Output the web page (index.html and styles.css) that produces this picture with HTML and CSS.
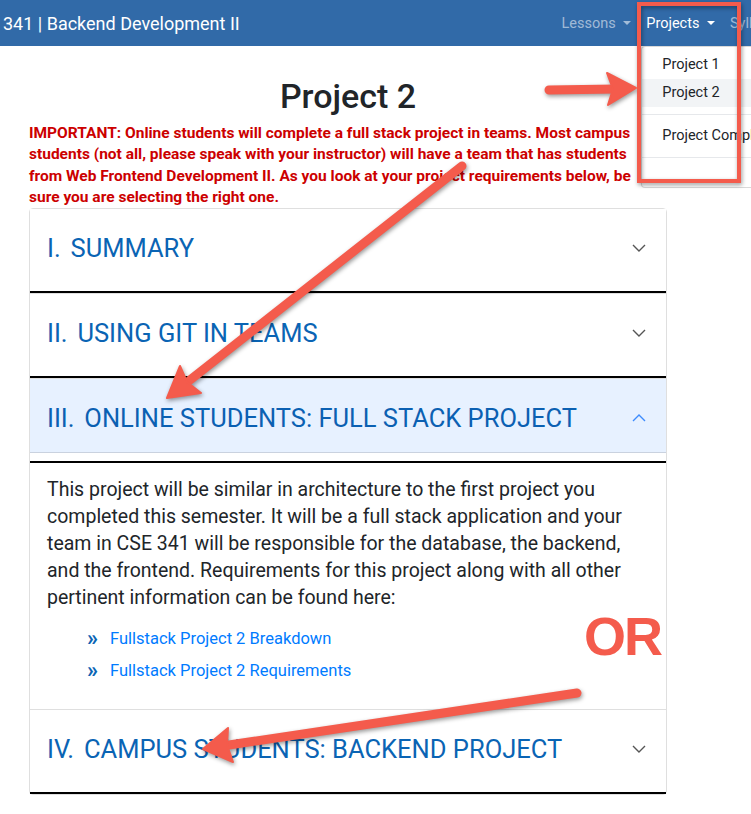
FILE: index.html
```html
<!DOCTYPE html>
<html lang="en">
<head>
<meta charset="utf-8">
<title>Project 2 | 341 Backend Development II</title>
<link rel="stylesheet" href="styles.css">
</head>
<body>
<div class="page">
  <nav class="navbar">
    <a class="brand" href="#">341 | Backend Development II</a>
    <ul class="nav-links">
      <li class="nav-item"><a class="nav-link" href="#">Lessons<span class="caret"></span></a></li>
      <li class="nav-item">
        <a class="nav-link active" href="#">Projects<span class="caret"></span></a>
        <div class="dropdown">
          <a class="dropdown-item" href="#">Project 1</a>
          <a class="dropdown-item hovered" href="#">Project 2</a>
          <div class="divider"></div>
          <a class="dropdown-item" href="#">Project Completion</a>
          <div class="divider"></div>
        </div>
      </li>
      <li class="nav-item"><a class="nav-link" href="#">Syllabus<span class="caret"></span></a></li>
    </ul>
  </nav>

  <main class="content">
    <h1 class="title">Project 2</h1>
    <p class="important">IMPORTANT: Online students will complete a full stack project in teams. Most campus<br>
      students (not all, please speak with your instructor) will have a team that has students<br>
      from Web Frontend Development II. As you look at your project requirements below, be<br>
      sure you are selecting the right one.</p>

    <div class="accordion">
      <div class="acc-item">
        <h2 class="acc-header">
          <button class="acc-button"><span class="acc-title"><span class="num">I.</span> SUMMARY</span>
            <svg class="chev" width="14" height="8" viewBox="0 0 14 8"><polyline points="1,1 7,7 13,1"/></svg>
          </button>
        </h2>
        <div class="acc-rule"></div>
      </div>
      <div class="acc-item">
        <h2 class="acc-header">
          <button class="acc-button"><span class="acc-title"><span class="num">II.</span> USING GIT IN TEAMS</span>
            <svg class="chev" width="14" height="8" viewBox="0 0 14 8"><polyline points="1,1 7,7 13,1"/></svg>
          </button>
        </h2>
        <div class="acc-rule"></div>
      </div>
      <div class="acc-item">
        <h2 class="acc-header">
          <button class="acc-button expanded"><span class="acc-title"><span class="num">III.</span> ONLINE STUDENTS: FULL STACK PROJECT</span>
            <svg class="chev up" width="14" height="8" viewBox="0 0 14 8"><polyline points="1,7 7,1 13,7"/></svg>
          </button>
        </h2>
        <div class="acc-rule"></div>
        <div class="acc-body">
          <p>This project will be similar in architecture to the first project you completed this semester. It will be a full stack application and your team in CSE 341 will be responsible for the database, the backend, and the frontend. Requirements for this project along with all other pertinent information can be found here:</p>
          <ul class="links">
            <li><span class="mark">»</span><a href="#">Fullstack Project 2 Breakdown</a></li>
            <li><span class="mark">»</span><a href="#">Fullstack Project 2 Requirements</a></li>
          </ul>
        </div>
      </div>
      <div class="acc-item">
        <h2 class="acc-header">
          <button class="acc-button"><span class="acc-title"><span class="num">IV.</span> CAMPUS STUDENTS: BACKEND PROJECT</span>
            <svg class="chev" width="14" height="8" viewBox="0 0 14 8"><polyline points="1,1 7,7 13,1"/></svg>
          </button>
        </h2>
        <div class="acc-rule"></div>
      </div>
    </div>
  </main>

  <svg class="annotations" width="751" height="814" viewBox="0 0 751 814" aria-hidden="true">
    <g class="ann">
      <rect class="box" x="639" y="4" width="100" height="177"/>
      <line class="shaft" x1="549" y1="90" x2="616" y2="89"/>
      <polygon class="head" points="636,88 607,73 613,89 608,105"/>
      <line class="shaft" x1="462" y1="166" x2="190" y2="380"/>
      <polygon class="head" points="167,398 180,366 187,382 201,393"/>
      <line class="shaft" x1="577" y1="693" x2="229" y2="745"/>
      <polygon class="head" points="203,749 228,728 227,745 233,762"/>
    </g>
    <text class="or" x="584" y="655">OR</text>
  </svg>
</div>
</body>
</html>
```

FILE: styles.css
```css
* {
  box-sizing: border-box;
}

body {
  margin: 0;
  font-family: Roboto, "Noto Sans", "Liberation Sans", Arial, sans-serif;
  color: #212529;
  background: #fff;
}

.page {
  position: relative;
  width: 751px;
  height: 814px;
  overflow: hidden;
}

/* ---------- navbar ---------- */
.navbar {
  display: flex;
  align-items: center;
  height: 46px;
  padding-left: 3px;
  background: #316aa8;
}

.brand {
  flex: 0 0 551px;
  color: #fff;
  font-size: 18px;
  text-decoration: none;
}

.nav-links {
  display: flex;
  flex: none;
  margin: 0;
  padding: 0;
  list-style: none;
}

.nav-item {
  position: relative;
}

.nav-link {
  display: flex;
  align-items: center;
  height: 46px;
  padding: 0 7.5px;
  font-size: 14.5px;
  color: rgba(255, 255, 255, 0.55);
  text-decoration: none;
}

.nav-link.active {
  color: #fff;
}

.caret {
  margin-left: 7.5px;
  border-top: 4px solid currentColor;
  border-left: 4px solid transparent;
  border-right: 4px solid transparent;
}

.dropdown {
  position: absolute;
  top: 46px;
  left: 2.5px;
  width: 170px;
  padding: 4px 0 22px;
  background: #fff;
  border: 1px solid rgba(0, 0, 0, 0.15);
  border-radius: 4px;
}

.dropdown-item {
  display: block;
  height: 28px;
  padding: 0 20px;
  line-height: 28px;
  font-size: 14.5px;
  color: #212529;
  text-decoration: none;
  white-space: nowrap;
}

.dropdown-item.hovered {
  background: #f2f4f6;
}

.divider {
  height: 1px;
  margin: 7px 0;
  background: #e6e8eb;
}

/* ---------- content ---------- */
.content {
  width: 638px;
  margin-left: 29px;
}

.title {
  margin: 30px 0 6px;
  text-align: center;
  font-size: 34px;
  line-height: 41px;
  font-weight: 500;
}

.important {
  margin: 0;
  font-size: 15.5px;
  line-height: 21.33px;
  font-weight: 700;
  color: #cc0000;
  white-space: nowrap;
}

/* ---------- accordion ---------- */
.accordion {
  border: 1px solid #dfdfdf;
  border-radius: 4px;
}

.acc-item + .acc-item {
  border-top: 1px solid #dfdfdf;
}

.acc-header {
  margin: 0 0 8px;
  font-size: inherit;
}

.acc-button {
  display: flex;
  align-items: center;
  justify-content: space-between;
  width: 100%;
  height: 74px;
  padding: 3px 20px 0 17px;
  border: 0;
  background: #fff;
  font-family: inherit;
  font-size: 25.5px;
  font-weight: 400;
  color: #0a64b4;
  text-align: left;
  cursor: pointer;
}

.acc-button.expanded {
  background: #e7f1ff;
  color: #0b60b2;
  box-shadow: inset 0 -1px 0 rgba(0, 0, 0, 0.125);
}

.num {
  margin-right: 3.5px;
}

.chev {
  flex: none;
  fill: none;
  stroke: #555;
  stroke-width: 1.4;
}

.chev.up {
  stroke: #3d8bfd;
}

.acc-rule {
  height: 2px;
  background: #000;
}

.acc-body {
  padding: 13px 17px 23px;
}

.acc-body p {
  margin: 0;
  font-size: 19.5px;
  line-height: 27px;
}

.links {
  margin: 11px 0 0;
  padding-left: 40px;
  list-style: none;
}

.links li {
  display: flex;
  align-items: center;
  height: 32px;
}

.mark {
  width: 23px;
  font-size: 22px;
  line-height: 1;
  font-weight: 700;
  color: #0a64b4;
}

.links a {
  font-size: 16.5px;
  color: #007bff;
  text-decoration: none;
}

/* ---------- annotations ---------- */
.annotations {
  position: absolute;
  top: 0;
  left: 0;
  pointer-events: none;
}

.ann {
  filter: drop-shadow(1px 2px 2px rgba(0, 0, 0, 0.4));
}

.box {
  fill: none;
  stroke: #f45b4c;
  stroke-width: 4;
}

.shaft {
  stroke: #f45b4c;
  stroke-width: 9;
  stroke-linecap: round;
}

.head {
  fill: #f45b4c;
  stroke: #f45b4c;
  stroke-width: 2;
  stroke-linejoin: round;
}

.or {
  font-family: "Liberation Sans", Arial, sans-serif;
  font-weight: 700;
  font-size: 54px;
  letter-spacing: -2px;
  fill: #f45b4c;
}
```
